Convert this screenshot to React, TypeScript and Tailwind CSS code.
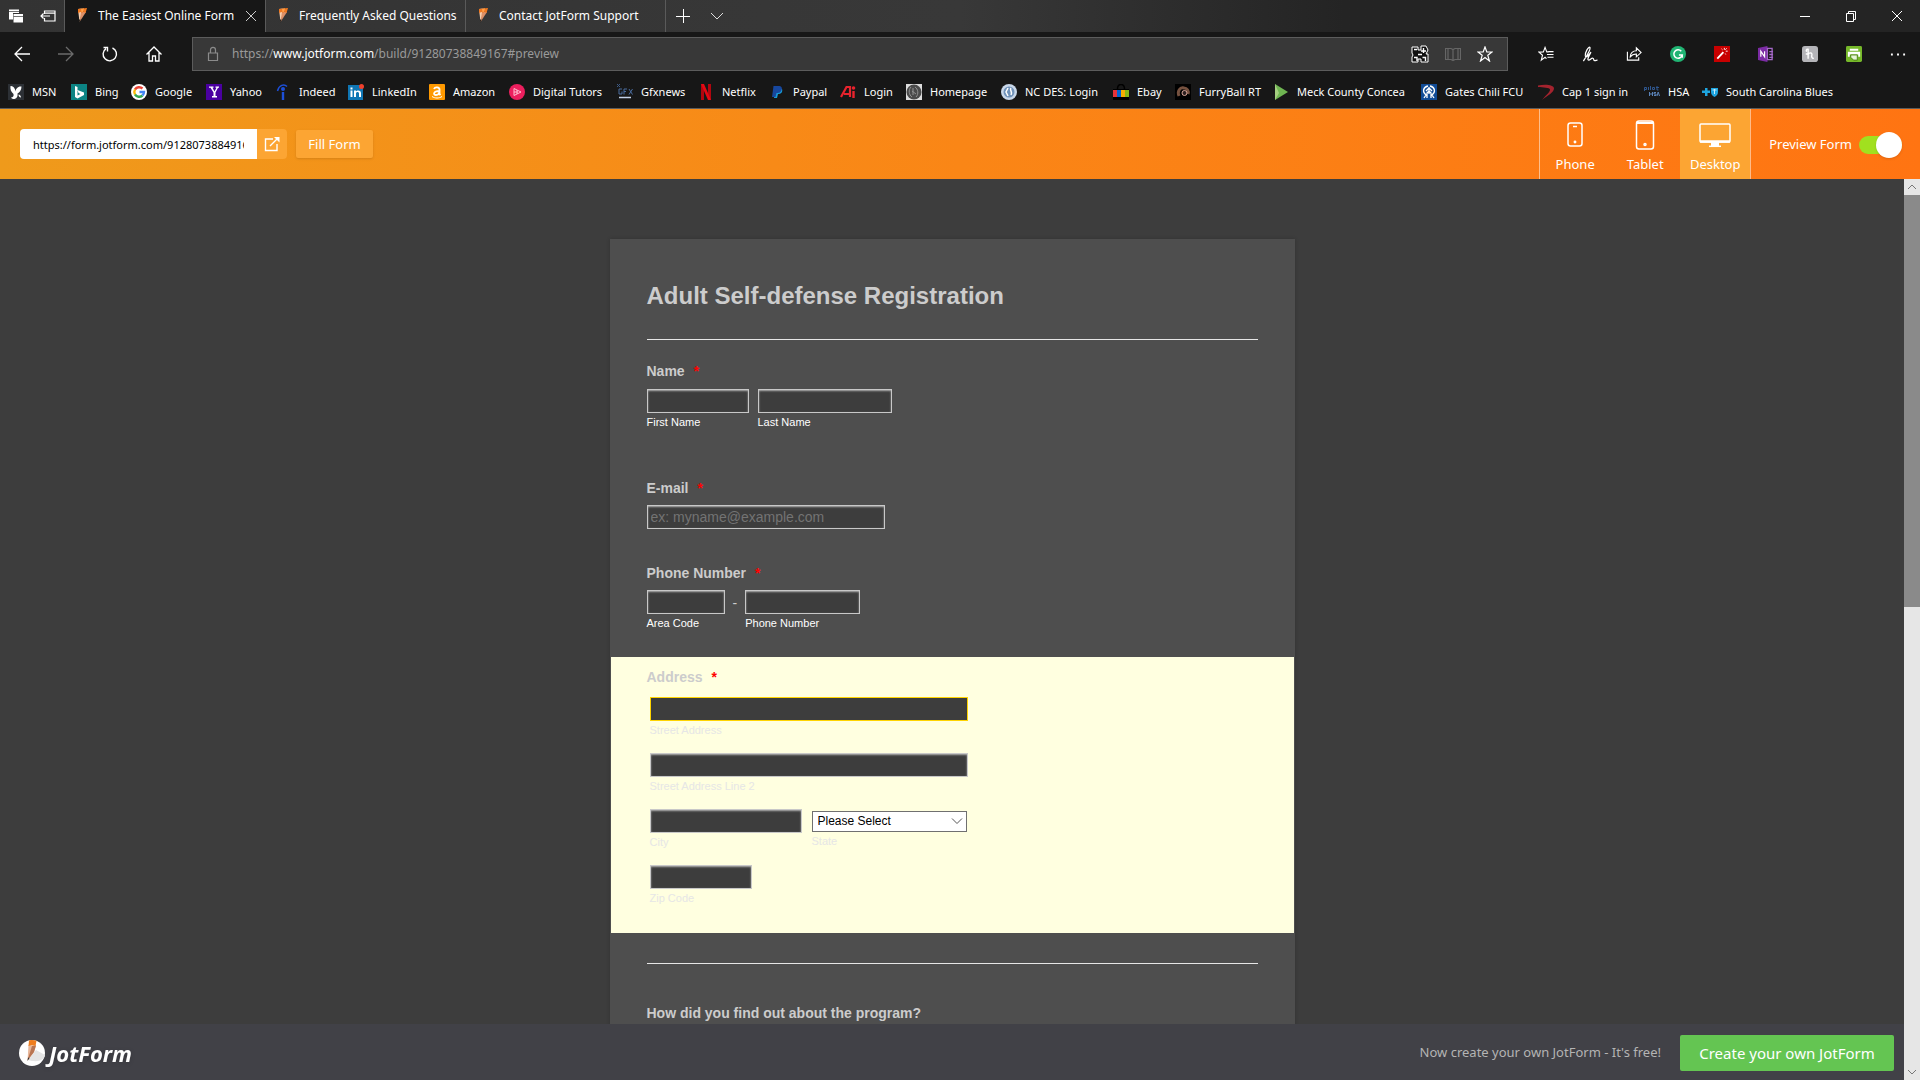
import React, { useState } from "react";

const PencilIcon = () => (
  <svg viewBox="0 0 16 16" className="w-4 h-4 shrink-0">
    <path d="M4 1l3.500-.5L8 5 5.500 14z" fill="#f7cfae" />
    <path d="M7 4h5L5.500 14z" fill="#dc9068" />
    <path d="M4 1 13 0l-1.500 5-2-1.200-1.500 1L6.500 4 4 5z" fill="#f07820" />
    <path d="M7 .7 10 .3 9 3.800l-1.500.5z" fill="#ffa048" />
    <path d="M5 11.500h1.600L5 15z" fill="#2a2420" />
  </svg>
);

const tabs = [
  { title: "The Easiest Online Form", active: true },
  { title: "Frequently Asked Questions", active: false },
  { title: "Contact JotForm Support", active: false },
];

const bookmarks = [
  { name: "MSN", width: "w-[63px]", icon: <><rect width="16" height="16" fill="#2c3035" /><path d="M2.500 2C5 1.500 7 4 7.500 7.500 7.500 5 10 2 13.500 2.500c0 3.500-2 6-4 7 .5 2.500-.5 5-3 5.500-1.500 0-3-.5-3.500-1.500 2 0 3-1.500 2.500-3.500C3 8 2 5 2.500 2z" fill="#fff" /><path d="M10.500 10.500c1.500 0 2.500 1.500 2.500 3-1.500 0-2.500-1-2.500-3z" fill="#fff" /></> },
  { name: "Bing", width: "w-[60px]", icon: <><rect width="16" height="16" fill="#0c8484" /><path d="M4 2l2.500 1v8.500L9.500 10 7.500 9 6.500 6 13 8.500v2.500L6.500 14.500 4 13z" fill="#fff" /></> },
  { name: "Google", width: "w-[75px]", icon: <><circle cx="8" cy="8" r="8" fill="#fff" /><g fill="none" strokeWidth="2.400"><path d="M4 5.500A5 5 0 0 1 11.500 4.500" stroke="#ea4335" /><path d="M4 5.500A5 5 0 0 0 4 10.500" stroke="#fbbc05" /><path d="M4 10.500A5 5 0 0 0 11.500 11.500" stroke="#34a853" /><path d="M11.500 11.500A5 5 0 0 0 13 8H8.500" stroke="#4285f4" /></g></> },
  { name: "Yahoo", width: "w-[69px]", icon: <><rect width="16" height="16" fill="#4a00a0" /><path d="M3 2.500h4.500v1.300h-1l2 3.700 2-3.700h-1V2.500H13v1.300h-1L9.500 8.500V12H11v1.500H6V12h1.500V8.500L4.500 3.800H3z" fill="#fff" /></> },
  { name: "Indeed", width: "w-[73px]", icon: <><path d="M2.500 7C4 1 9-.5 12 2.500" fill="none" stroke="#1d4fd8" strokeWidth="1.500" /><circle cx="8" cy="5" r="2" fill="#1d4fd8" /><path d="M6.800 8h2.400v8H6.800z" fill="#1d4fd8" /></> },
  { name: "LinkedIn", width: "w-[81px]", icon: <><rect y="1" width="15" height="15" fill="#0f76b4" /><path d="M2.500 6.500h2V13h-2zM2.500 3.500h2v2h-2zM6 6.500h2v1c1-1.700 5-1.500 5 1.500v4h-2V9.500c0-2-3-2-3 0V13H6z" fill="#fff" /><circle cx="13.500" cy="2.500" r="2.500" fill="#f0402c" /></> },
  { name: "Amazon", width: "w-[80px]", icon: <><rect width="16" height="16" rx="1" fill="#ff9900" /><path d="M5 5c1-2.500 5.500-2 5.500.5V10l1 1M10.500 7C4 7 4 11 7 11c2 0 3.500-1.500 3.500-4" fill="none" stroke="#fff" strokeWidth="1.800" /><path d="M3 12.500c3 2 7 2 10 0" fill="none" stroke="#fff" /></> },
  { name: "Digital Tutors", width: "w-[108px]", icon: <><circle cx="8" cy="8" r="8" fill="#ec1f5e" /><path d="M5 4.500 12 8l-7 3.500zM8 6v4M5 8h4" fill="none" stroke="#ffc0d0" /></> },
  { name: "Gfxnews", width: "w-[81px]", icon: <><path d="M0 0l3 3M3 0L0 3" stroke="#3d5a85" /><path d="M5 5H2v5h3V7.500M7 10.500V5h3M7 7.500h2M12 5l3.500 5.500M15.500 5 12 10.500" fill="none" stroke="#4a6c9e" /><path d="M2 13.500h12" stroke="#c5d3e8" strokeWidth="1.500" /></> },
  { name: "Netflix", width: "w-[71px]", icon: <><path d="M3 0h3v16H3zM10 0h3v16h-3z" fill="#b1060f" /><path d="M3 0h3l7 16h-3z" fill="#e50914" /></> },
  { name: "Paypal", width: "w-[71px]", icon: <><path d="M6 5h7c1 3-1 5-4 5l-1 4H5z" fill="#179bd7" /><path d="M4.500 2h5c3 0 4 2 3 4-1 3-3 3-5 3l-1 4H3z" fill="#17479e" /></> },
  { name: "Login", width: "w-[66px]", icon: <><path d="M1 13 6.500 3H10v10M4 10h5" fill="none" stroke="#e8232d" strokeWidth="2.200" /><path d="M13.500 7v7" stroke="#e8232d" strokeWidth="2.400" /><circle cx="13.500" cy="4" r="1.800" fill="#e8232d" /></> },
  { name: "Homepage", width: "w-[95px]", icon: <><rect width="16" height="16" fill="#ddd" /><circle cx="8" cy="8" r="7.500" fill="#4b4b4b" /><path d="M5 3c-3 3-2 8 1 10M9 3c3 2 4 7 1 10M6 7l4 3M7 4v7" fill="none" stroke="#929292" /></> },
  { name: "NC DES: Login", width: "w-[112px]", icon: <><circle cx="8" cy="8" r="8" fill="#c9d8ea" /><circle cx="8" cy="8" r="5.500" fill="#7193ba" /><path d="M7 4 5 8l2 4M10 4c-2 2 2 3 0 7" fill="none" stroke="#fff" strokeWidth="1.500" /></> },
  { name: "Ebay", width: "w-[62px]", icon: <><path d="M4.500 5c0-6 7-6 7 0" fill="none" stroke="#000" strokeWidth="1.500" /><path d="M0 5h16v11H0z" fill="#000" /><path d="M0 6h4v7H0z" fill="#e53238" /><path d="M4 6h4v7H4z" fill="#0064d2" /><path d="M8 6h4v7H8z" fill="#f5af02" /><path d="M12 6h4v7h-4z" fill="#86b817" /></> },
  { name: "FurryBall RT", width: "w-[98px]", icon: <><rect width="16" height="16" fill="#000" /><path d="M4 12C2 7 5 3 9 4c3 0 5 3 4 6" fill="none" stroke="#76513f" strokeWidth="3" /><circle cx="9.500" cy="9" r="2.500" fill="#2c2020" stroke="#d8a79a" /></> },
  { name: "Meck County Concea", width: "w-[148px]", icon: <><path d="M2 0 15 8 2 16z" fill="#6fb552" /><path d="M2 0 6 9l-4 7z" fill="#a5cf80" /></> },
  { name: "Gates Chili FCU", width: "w-[117px]", icon: <><rect width="16" height="16" fill="#114c96" /><path d="M7 2C2 3 1 8 5 11l-2 3M9 2c5 1 6 6 2 9l2 3M8 3v7M5 7l3-3 3 3M6 14V9l2-2 2 2v5" fill="none" stroke="#fff" strokeWidth="1.300" /></> },
  { name: "Cap 1 sign in", width: "w-[106px]", icon: <path d="M0 1.500C8 0 16 1 16 4.500c0 3.500-6 7-12 11.500 4-5 8.500-8.500 8-10.500S5 3.500 0 3z" fill="#a3232e" /> },
  { name: "HSA", width: "w-[58px]", icon: <><path d="M.5 7V3.500h2v2h-2M4.500 3v3M6.500 2v4M8.500 3.500h2v2h-2zM13 2v4h1.500M12 3.500h3" fill="none" stroke="#2e568f" /><path d="M5.500 8v4M5.500 10h2.500M8.500 8v4M12 8.500h-2V10h2v1.500h-2M13 12l1.200-4 1.300 4" fill="none" stroke="#5b83b8" /></> },
  { name: "South Carolina Blues", width: "w-[136px]", icon: <><path d="M3 4h2.500v2.500H8V9H5.500v3H3V9H0V6.500h3z" fill="#1ea5e0" /><path d="M9 4h7v4c0 3-2 4-3.500 5C11 12 9 11 9 8z" fill="#1ea5e0" /><path d="M12.500 5v5M10.500 6h4" stroke="#c8ecfa" /></> },
];

const extensions = [
  { name: "Favorites", icon: <path d="M9 13.500 7.500 12 3.500 15l1.300-5.200L1 6.500l4.700-.3L7.500 1.500l1.800 4.700h2M9.500 9h7M10 12h6.500M11 6h5.500" fill="none" stroke="#fff" strokeWidth="1.200" /> },
  { name: "Add notes", icon: <path d="M1.500 16C4 12 9.500 4 8.500 1.500 7 0 3 7 3.500 10.500c.5 2.500 4-1 6-4-2 4-4.500 8-2.500 8.500 2 0 3-2.500 4.500-2s.5 2.500 2 2.500 1.500-.5 3-.5" fill="none" stroke="#fff" strokeWidth="1.300" /> },
  { name: "Share", icon: <path d="M1.500 6v9h12v-3M4.500 11.500c0-4 3-6.500 6.500-6.500V2l5 5-5 4.500v-3c-3 0-5 1-6.500 3z" fill="none" stroke="#fff" strokeWidth="1.200" /> },
  { name: "Grammarly", icon: <><circle cx="8.500" cy="8.500" r="8.500" fill="#20b473" /><path d="M12 5.500A4.500 4.500 0 1 0 13 9.500H9.500M13 9.500v3" fill="none" stroke="#fff" strokeWidth="1.600" /></> },
  { name: "Magic wand", icon: <><rect width="17" height="17" fill="#c80000" /><path d="M3.500 13.500 10 6.500" stroke="#fff" strokeWidth="2" /><path d="M11 2v2M14.500 5.500h-2M13.500 2.500 12 4M8 3l1 1M12 8l.5 1" stroke="#fff" /></> },
  { name: "OneNote", icon: <><path d="M0 2 10 0v17L0 15z" fill="#7b2ba4" /><path d="M10 2.500h5v12h-5zM12 6h4M12 9h4M12 12h4" fill="none" stroke="#a468c8" strokeWidth="1.400" /><path d="M3 11.500V5.500l4 6V5.500" fill="none" stroke="#fff" strokeWidth="1.300" /></> },
  { name: "Honey", icon: <><rect width="17" height="17" rx="3" fill="#b4b4b8" /><path d="M6.500 13.500V3.500C4.500 3 4 5 5 6M6.500 9C8 6.500 11 7 10.500 9.500c-.5 2 0 4 2 3.500M4 8.500h3" fill="none" stroke="#fff" strokeWidth="1.500" /></> },
  { name: "Print friendly", icon: <><rect width="17" height="17" rx="1.500" fill="#76b82a" /><path d="M4 3h9v2H4zM2 6h13v5.500h-2V9H4v2.500H2z" fill="#fff" /><path d="M5 9.500h7V15H8l-3-3z" fill="#e6f4d6" stroke="#4c8212" /></> },
  { name: "Settings and more", icon: <path d="M1 8h2v2H1zM7.500 8h2v2h-2zM14 8h2v2h-2z" fill="#fff" /> },
];

const devices = [
  { name: "Phone", icon: <><rect x="9" y="4" width="14" height="23" rx="2.500" /><path d="M14 7.500h4" /><circle cx="16" cy="23" r=".7" /></> },
  { name: "Tablet", icon: <><rect x="7.500" y="2" width="17" height="28" rx="2.500" /><path d="M8 4h16" strokeWidth="2" /><circle cx="16" cy="25.500" r="1" /></> },
  { name: "Desktop", icon: <><rect x="1" y="5" width="30" height="18" rx="1" /><path d="M1 22.500h30" strokeWidth="2.500" /><path d="M16 23v4" strokeWidth="8" /><path d="M10 27.300h12" /></> },
];

const TabBar = () => (
  <header className="flex h-8 bg-linear-to-r from-[#333333] via-[#383838] to-[#242424] to-70% text-white">
    <div className="flex items-center w-16 shrink-0 pl-2 gap-4">
      <button aria-label="Tabs you've set aside">
        <svg viewBox="0 0 16 16" className="w-4 h-4">
          <path d="M1 1.500h10V5H5v6.500H1z" fill="#fff" />
          <path d="M5.500 6h9.500v8.500H5.500z" fill="#fff" />
          <path d="M1 3.500h10M5.500 8.500H15" stroke="#333" strokeWidth=".7" />
        </svg>
      </button>
      <button aria-label="Set these tabs aside">
        <svg viewBox="0 0 16 16" className="w-4 h-4" fill="none" stroke="#fff" strokeWidth="1.200">
          <path d="M4.500 6V3H15v10H4.500v-3M4.500 5.200H15M10 8H1M3.500 5.500 1 8l2.500 2.500" />
        </svg>
      </button>
    </div>

    {tabs.map((tab) => (
      <div
        key={tab.title}
        className={`flex items-center w-[200px] pr-2 border-[#5a5a5a] ${tab.active ? "w-[202px] pl-[9px] border-x bg-[#171717]" : "w-[200px] pl-[9px] border-r"}`}
      >
        <PencilIcon />
        <span className="ml-2 flex-1 whitespace-nowrap text-[12px]">{tab.title}</span>
        {tab.active && (
          <button aria-label="Close tab" className="ml-2">
            <svg viewBox="0 0 12 12" className="w-3 h-3" stroke="#ccc"><path d="M1 1l10 10M11 1 1 11" /></svg>
          </button>
        )}
      </div>
    ))}

    <div className="flex items-center gap-5 pl-2.5">
      <button aria-label="New tab">
        <svg viewBox="0 0 14 14" className="w-3.5 h-3.5" stroke="#fff"><path d="M7.500 0v14M0 7.500h14" /></svg>
      </button>
      <button aria-label="Show tab previews">
        <svg viewBox="0 0 14 14" className="w-3.5 h-3.5" fill="none" stroke="#ddd"><path d="M1 4l6 6 6-6" /></svg>
      </button>
    </div>

    <div className="flex items-center gap-8 ml-auto pr-4">
      <button aria-label="Minimize">
        <svg viewBox="0 0 14 14" className="w-3.5 h-3.5" stroke="#fff"><path d="M2 7.500h10" /></svg>
      </button>
      <button aria-label="Restore">
        <svg viewBox="0 0 14 14" className="w-3.5 h-3.5" fill="none" stroke="#fff"><path d="M2.500 4.500h7v8h-7zM4.500 4.500v-2h7v8h-2" /></svg>
      </button>
      <button aria-label="Close">
        <svg viewBox="0 0 14 14" className="w-3.5 h-3.5" stroke="#fff"><path d="M2 2l10 10M12 2 2 12" /></svg>
      </button>
    </div>
  </header>
);

const Toolbar = () => (
  <div className="flex items-center h-11 bg-[#171717] text-white">
    <nav className="flex items-center gap-7 pl-3.5 w-48 shrink-0">
      <button aria-label="Back">
        <svg viewBox="0 0 16 16" className="w-4 h-4" fill="none" stroke="#fff" strokeWidth="1.300"><path d="M16 8H1M8 1 1 8l7 7" /></svg>
      </button>
      <button aria-label="Forward">
        <svg viewBox="0 0 16 16" className="w-4 h-4" fill="none" stroke="#6b6b6b" strokeWidth="1.300"><path d="M0 8h15M8 1l7 7-7 7" /></svg>
      </button>
      <button aria-label="Refresh">
        <svg viewBox="0 0 16 16" className="w-4 h-4" fill="none" stroke="#fff" strokeWidth="1.400"><path d="M10.500 2A6.700 6.700 0 1 1 4 2.600M1.500 1.500h4v4" /></svg>
      </button>
      <button aria-label="Home">
        <svg viewBox="0 0 16 16" className="w-4 h-4" fill="none" stroke="#fff" strokeWidth="1.300"><path d="M.5 8.500 8 1l7.500 7.500M3 6.500V15h3.500v-5h3v5H13V6.500" /></svg>
      </button>
    </nav>

    <div className="flex items-center flex-1 h-[34px] bg-[#383838] border border-[#5c5c5c] px-3.5">
      <svg viewBox="0 0 16 16" className="w-4 h-4 -ml-0.5" fill="none" stroke="#8b8b8b" strokeWidth="1.200"><path d="M3.500 7h9v7.500h-9zM5.500 7V4c0-3.500 5-3.500 5 0v3" /></svg>
      <p className="ml-[11px] text-[12px] text-[#9a9a9a]">
        https://<span className="text-white">www.jotform.com</span>/build/91280738849167#preview
      </p>
      <div className="flex items-center gap-4 ml-auto">
        <button aria-label="Translate">
          <svg viewBox="0 0 18 18" className="w-[18px] h-[18px]">
            <path d="M1 2h6v3h3V1h5l2 4-2 4h2v8h-7v-3H7v3H1v-5l1-2-1-2z" fill="#111" stroke="#fff" />
            <path d="M3 4.500h3M10 6h5M12.500 3v5M3 12.500h3V16M11.500 12.500h3V16M7 9.500h4" stroke="#fff" strokeWidth="1.400" fill="none" />
          </svg>
        </button>
        <button aria-label="Reading view">
          <svg viewBox="0 0 16 16" className="w-4 h-4" fill="none" stroke="#666" strokeWidth="1.200"><path d="M.5 2.500h5.500l2 1 2-1h5.500v11H10l-2 1-2-1H.5zM8 3.500v11M3 2.500v11M13 2.500v11" /></svg>
        </button>
        <button aria-label="Add to favorites">
          <svg viewBox="0 0 16 16" className="w-4 h-4" fill="none" stroke="#fff" strokeWidth="1.200"><path d="M8 1l1.800 5H15l-4.200 3.300L12.500 15 8 11.500 3.500 15l1.700-5.700L1 6h5.200z" /></svg>
        </button>
      </div>
    </div>

    <div className="flex items-center gap-7 pl-[30px] pr-3.5">
      {extensions.map((e) => (
        <button key={e.name} aria-label={e.name}>
          <svg viewBox="0 0 17 17" className="w-4 h-4">{e.icon}</svg>
        </button>
      ))}
    </div>
  </div>
);

const BookmarksBar = () => (
  <nav className="flex items-center h-[33px] bg-[#171717] border-b border-[#5c5c5c] text-white text-[11px] pl-2">
    {bookmarks.map((b) => (
      <a href="#" key={b.name} className={`flex items-center gap-2 whitespace-nowrap shrink-0 ${b.width}`}>
        <svg viewBox="0 0 16 16" className="w-4 h-4 shrink-0">{b.icon}</svg>
        {b.name}
      </a>
    ))}
  </nav>
);

const BuilderHeader = () => {
  const [device, setDevice] = useState("Desktop");
  const [preview, setPreview] = useState(true);

  return (
    <section className="flex items-center h-[70px] shrink-0 bg-linear-to-r from-[#ef9a1b] via-[#fa8616] to-[#ff7412] text-white text-[13px]">
      <div className="flex ml-5 rounded overflow-hidden">
        <input
          aria-label="Form link"
          defaultValue="https://form.jotform.com/91280738849167"
          className="w-[237px] h-[30px] px-[13px] bg-white text-black text-[11px] outline-none"
        />
        <button aria-label="Open form in new tab" className="flex items-center justify-center w-[30px] h-[30px] bg-[#fca533]">
          <svg viewBox="0 0 16 16" className="w-4 h-4" fill="none" stroke="#fff" strokeWidth="1.400">
            <path d="M9 3H1.500v11.500H13V8M6 10l7.500-7.500" />
            <path d="M10 1h5.500v5.500z" fill="#fff" stroke="none" />
          </svg>
        </button>
      </div>
      <button className="h-7 w-[77px] ml-[9px] pt-px rounded-xs bg-[#fca533] shadow-sm">Fill Form</button>

      <div className="flex self-stretch ml-auto border-x border-white/50">
        {devices.map((d) => (
          <button
            key={d.name}
            onClick={() => setDevice(d.name)}
            className={`flex flex-col items-center w-[70px] pt-2.5 ${device === d.name ? "bg-[#fca533]" : ""}`}
          >
            <svg viewBox="0 0 32 32" className="w-8 h-8" fill="none" stroke="#fff" strokeWidth="1.500">{d.icon}</svg>
            <span className="mt-[3px] leading-5">{d.name}</span>
          </button>
        ))}
      </div>

      <label className="flex items-center gap-[7px] pl-[18px] pr-[18px] pt-px">
        Preview Form
        <span className="flex items-center justify-end w-[43px] h-[18px] rounded-full bg-[#a1e01f]">
          <input type="checkbox" checked={preview} onChange={() => setPreview(!preview)} className="sr-only" />
          <span className="w-[26px] h-[26px] shrink-0 rounded-full bg-white shadow" />
        </span>
      </label>
    </section>
  );
};

const FieldLabel = ({ children, htmlFor }: any) => (
  <label htmlFor={htmlFor} className="flex text-[14px] leading-5 font-bold text-[#cccccc]">
    {children}
    <span className="ml-[9px] text-[#ff0000]">*</span>
  </label>
);

const Field = ({ id, label, width, light, focused, placeholder }: any) => (
  <div className="flex flex-col">
    <input
      id={id}
      placeholder={placeholder}
      className={`h-6 px-[3px] bg-[#3d3d3d] border text-[14px] text-[#cccccc] placeholder:text-[#737373] outline-none ${width} ${
        focused ? "border-[#ffd400]" : "border-[#c8c8c8] shadow-[inset_0_1px_2px_#b0b0b0]"
      }`}
    />
    {label && (
      <label htmlFor={id} className={`mt-0.5 text-[11px] leading-[14px] ${light ? "text-[#e6e6e6]" : "text-white"}`}>
        {label}
      </label>
    )}
  </div>
);

const RegistrationForm = () => (
  <form className="w-[685px] shrink-0 mt-[60px] border border-[#4e4e4e] bg-[#4e4e4e] shadow-[0_0_4px_rgba(0,0,0,0.2)] font-['Liberation_Sans',Arial,sans-serif]">
    <div className="px-9">
      <h1 className="pt-[42px] text-[24px] leading-7 font-bold text-[#cccccc]">Adult Self-defense Registration</h1>
      <hr className="mt-[29px] border-[#e6e6e6]" />

      <section className="mt-[21px]">
        <FieldLabel htmlFor="first">Name</FieldLabel>
        <div className="flex gap-[9px] mt-2">
          <Field id="first" label="First Name" width="w-[102px]" />
          <Field id="last" label="Last Name" width="w-[134px]" />
        </div>
      </section>

      <section className="mt-[49px]">
        <FieldLabel htmlFor="email">E-mail</FieldLabel>
        <div className="flex mt-[7px]">
          <Field id="email" width="w-[238px]" placeholder="ex: myname@example.com" />
        </div>
      </section>

      <section className="mt-[34px] mb-[27px]">
        <FieldLabel htmlFor="area">Phone Number</FieldLabel>
        <div className="flex gap-2 mt-[7px]">
          <Field id="area" label="Area Code" width="w-[78px]" />
          <span className="text-[14px] leading-[26px] text-[#cccccc]">-</span>
          <Field id="phone" label="Phone Number" width="w-[115px]" />
        </div>
      </section>
    </div>

    <section className="px-9 pt-[10px] pb-7 bg-[#ffffe0]">
      <FieldLabel htmlFor="street">Address</FieldLabel>
      <div className="flex flex-col gap-4 items-start mt-[10px] ml-[3px]">
        <Field id="street" label="Street Address" width="w-[318px]" light focused />
        <Field id="street2" label="Street Address Line 2" width="w-[318px]" light />
        <div className="flex gap-[10px]">
          <Field id="city" label="City" width="w-[152px]" light />
          <div className="flex flex-col justify-center">
            <div className="relative">
              <select id="state" className="block appearance-none w-[155px] h-[21px] pl-[5px] bg-white border border-[#707070] text-[12px] text-black">
                <option>Please Select</option>
              </select>
              <svg viewBox="0 0 12 12" className="absolute right-1 top-1 w-3 h-3" fill="none" stroke="#555"><path d="M1 3.500l5 5 5-5" /></svg>
            </div>
            <label htmlFor="state" className="mt-0.5 text-[11px] leading-[14px] text-[#e6e6e6]">State</label>
          </div>
        </div>
        <Field id="zip" label="Zip Code" width="w-[102px]" light />
      </div>
    </section>

    <div className="px-9 pb-10">
      <hr className="mt-[30px] border-[#e6e6e6]" />
      <p className="mt-[39px] text-[14px] leading-5 font-bold text-[#cccccc]">How did you find out about the program?</p>
    </div>
  </form>
);

const Footer = () => (
  <footer className="flex items-center h-14 shrink-0 pl-[19px] pr-[10px] pt-0.5 bg-[#414147]">
    <a href="#" className="flex items-center gap-1 text-white">
      <svg viewBox="0 0 26 26" className="w-[26px] h-[26px]">
        <circle cx="13" cy="13" r="13" fill="#fff" />
        <path d="M17 10 26 15c-1 5-7 8-17 5z" fill="#e4e4e4" />
        <path d="M9.500 5 17 5.500 15 12 8.500 20.500z" fill="#e8b79a" />
        <path d="M13 6l4-.5L15 12l-6.500 8.500z" fill="#b97552" />
        <path d="M10 .5C13-.3 15 0 17.500.8L16.500 6 13 5l-3.500 1z" fill="#ef7d1e" />
        <path d="M9 17.500l1.500.5-2 3z" fill="#333" />
      </svg>
      <span className="text-[22px] leading-8 font-bold italic drop-shadow-sm">JotForm</span>
    </a>
    <p className="ml-auto text-[13px] text-[#b4b4b4]">Now create your own JotForm - It's free!</p>
    <button className="ml-[19px] w-[214px] h-9 rounded-xs bg-[#64c552] text-white text-[15px]">Create your own JotForm</button>
  </footer>
);

const ScrollBar = () => (
  <div className="flex flex-col w-4 shrink-0 bg-[#e6e6e6]">
    <svg viewBox="0 0 16 16" className="w-4 h-4" fill="none" stroke="#777"><path d="M4 10l4-4 4 4" /></svg>
    <div className="h-[calc(46%-2px)] bg-[#8a8a8a]" />
    <svg viewBox="0 0 16 16" className="w-4 h-4 mt-auto" fill="none" stroke="#777"><path d="M4 6l4 4 4-4" /></svg>
  </div>
);

export default function App() {
  return (
    <div className="flex flex-col h-screen overflow-hidden bg-[#3d3d3d] font-['Noto_Sans','Open_Sans',sans-serif]">
      <TabBar />
      <Toolbar />
      <BookmarksBar />
      <BuilderHeader />
      <div className="flex flex-1 min-h-0">
        <div className="flex flex-col flex-1">
          <main className="flex justify-center items-start flex-1 min-h-0 overflow-hidden">
            <RegistrationForm />
          </main>
          <Footer />
        </div>
        <ScrollBar />
      </div>
    </div>
  );
}
